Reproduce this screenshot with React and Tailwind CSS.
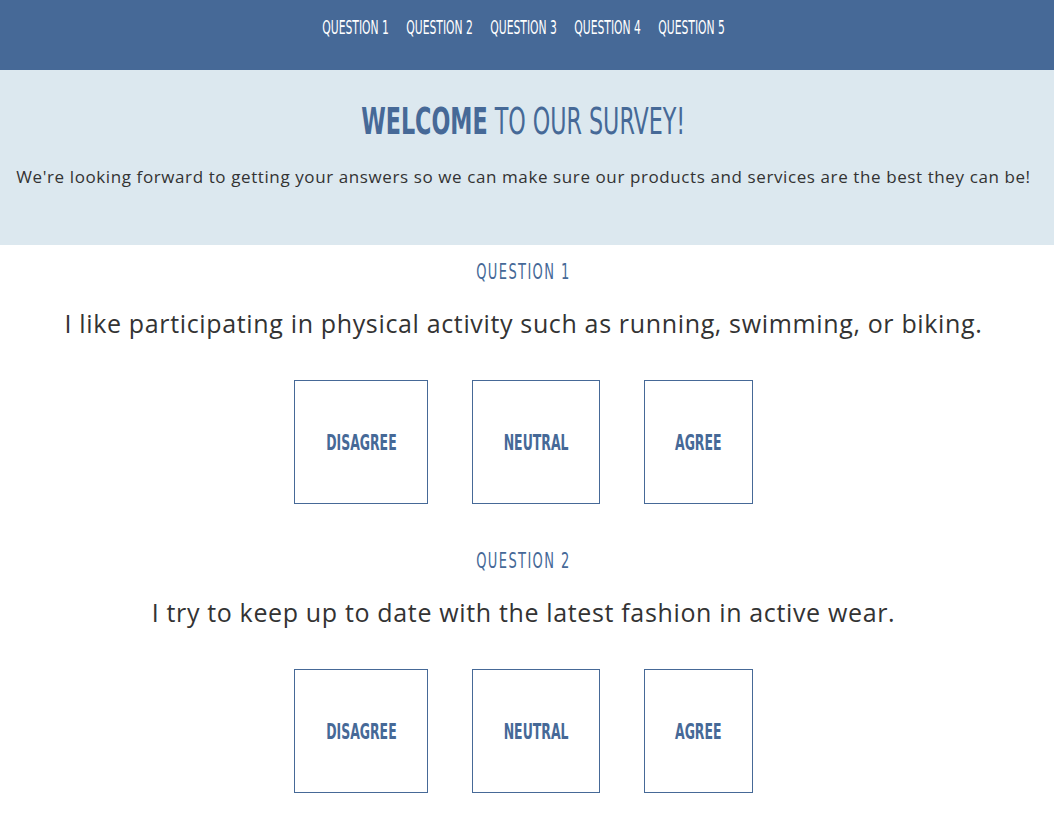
import React from "react";

const cond = { fontFamily: '"DejaVu Sans Condensed", "Liberation Sans", sans-serif' };
const body = { fontFamily: '"Open Sans", "Noto Sans", sans-serif' };

function Choice({ label, w }) {
  return (
    <button
      className={`${w} h-[124px] border border-[#466997] bg-white flex items-center justify-center pt-[4px] text-[#466997] text-[21px] font-bold overflow-visible`}
      style={cond}
    >
      <span className="inline-block whitespace-nowrap scale-x-[0.66]">{label}</span>
    </button>
  );
}

function Question({ n, text }) {
  return (
    <section className="flex flex-col items-center">
      <div className="w-[94px] flex justify-center text-[#466997] text-[21px] tracking-[2px] leading-[24px] font-light" style={cond}>
        <span className="inline-block whitespace-nowrap scale-x-[0.69]">QUESTION {n}</span>
      </div>
      <p className="mt-[22px] text-[25px] tracking-[0.65px] leading-[34px] text-[#333]" style={body}>
        {text}
      </p>
      <div className="mt-[40px] flex gap-[44px]">
        <Choice label="DISAGREE" w="w-[134px]" />
        <Choice label="NEUTRAL" w="w-[128px]" />
        <Choice label="AGREE" w="w-[109px]" />
      </div>
    </section>
  );
}

export default function App() {
  return (
    <div className="w-[1054px] min-h-[816px] bg-white">
      <nav className="h-[70px] bg-[#466997] flex justify-center pt-[15px] pr-[7px] gap-[16px] text-white text-[20px] leading-[24px]" style={cond}>
        {[1, 2, 3, 4, 5].map((i) => (
          <a key={i} className="w-[68px] flex justify-center cursor-pointer">
            <span className="inline-block whitespace-nowrap scale-x-[0.6]">QUESTION {i}</span>
          </a>
        ))}
      </nav>
      <header className="h-[175px] bg-[#dce8ef] flex flex-col items-center pt-[29px] pr-[7px]">
        <h1 className="w-[322px] flex justify-center text-[38px] leading-[44px] text-[#466997]" style={cond}>
          <span className="inline-block whitespace-nowrap scale-x-[0.65]">
            <span className="font-bold">WELCOME</span> <span className="font-light">TO OUR SURVEY!</span>
          </span>
        </h1>
        <p className="mt-[22px] text-[17px] tracking-[0.6px] leading-[24px] text-[#333]" style={body}>
          We're looking forward to getting your answers so we can make sure our products and services are the best they can be!
        </p>
      </header>
      <main className="pt-[15px] pr-[7px] flex flex-col gap-[45px]">
        <Question n={1} text="I like participating in physical activity such as running, swimming, or biking." />
        <Question n={2} text="I try to keep up to date with the latest fashion in active wear." />
      </main>
    </div>
  );
}
